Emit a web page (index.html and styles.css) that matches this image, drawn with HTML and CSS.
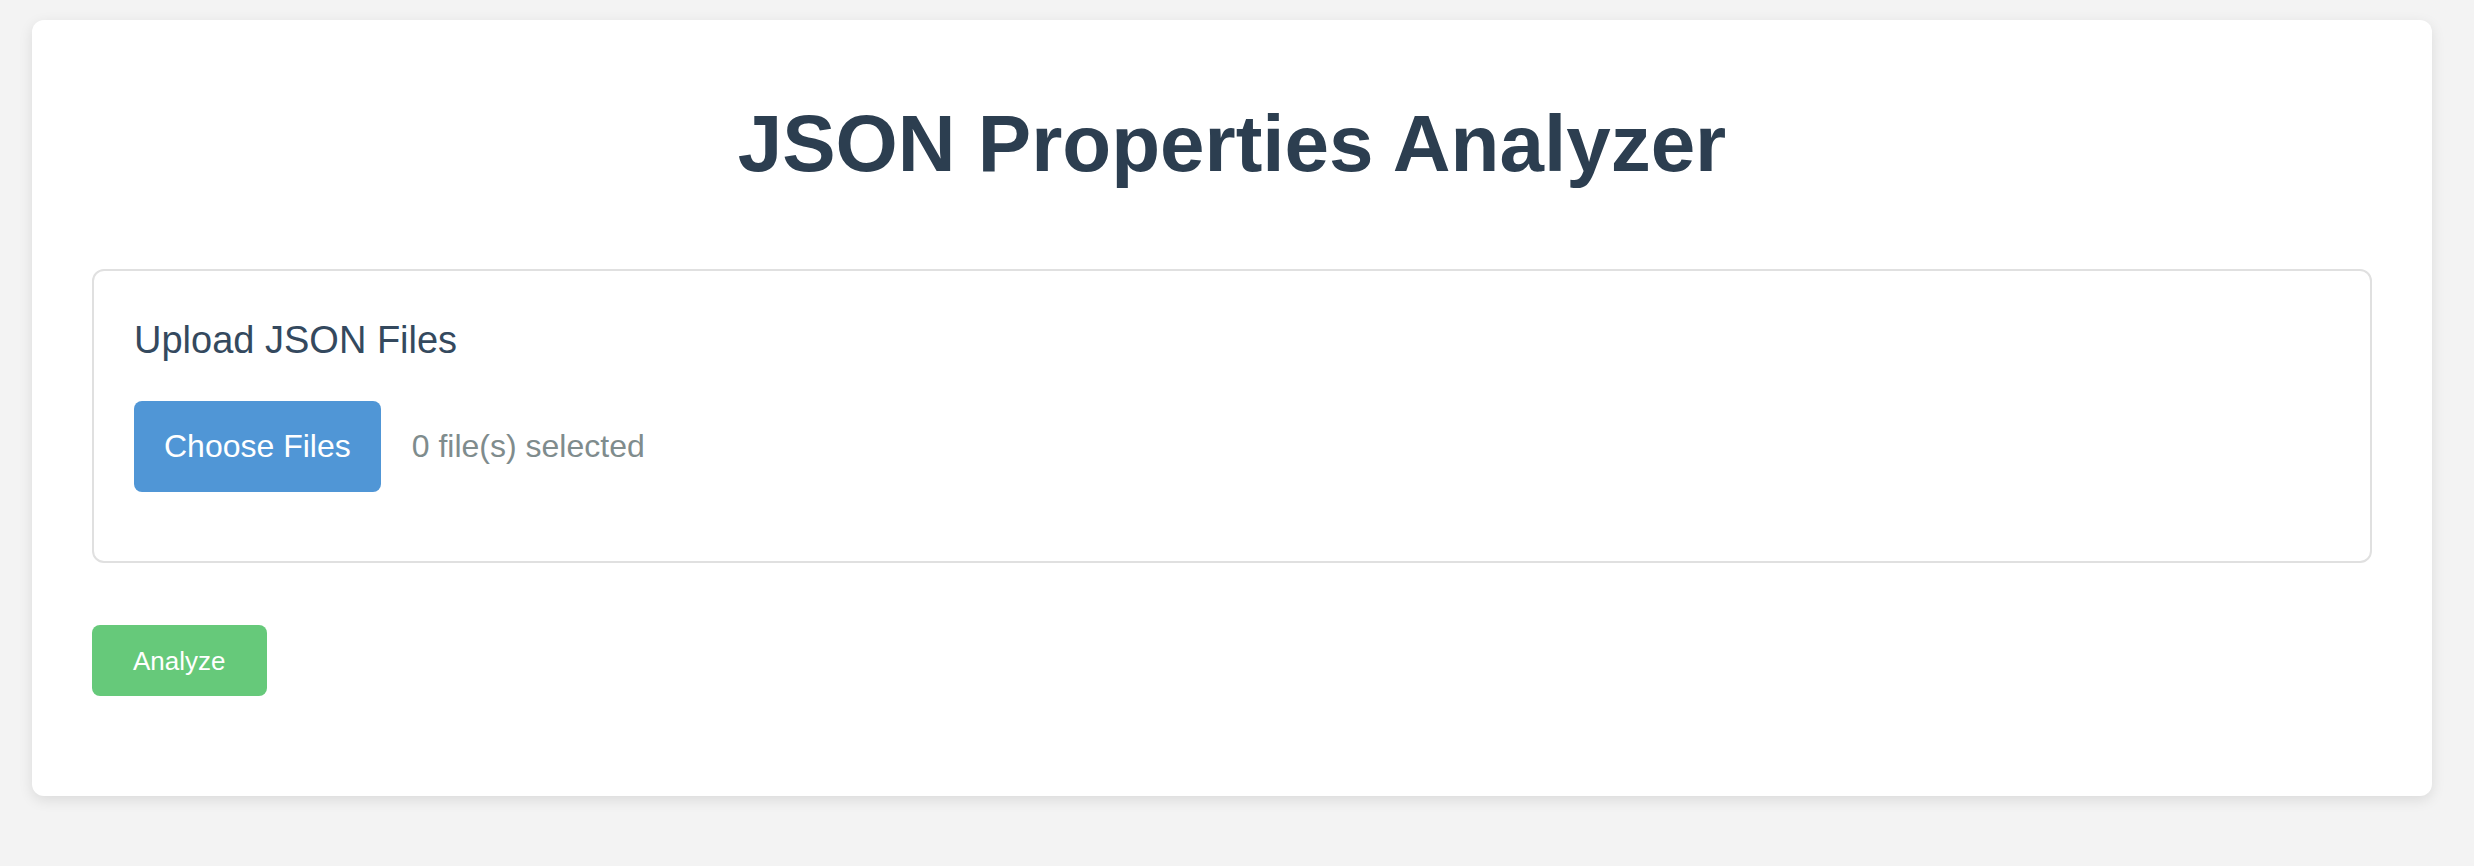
FILE: index.html
```html
<!DOCTYPE html>
<html lang="en">
<head>
<meta charset="utf-8">
<title>JSON Properties Analyzer</title>
<link rel="stylesheet" href="styles.css">
</head>
<body>
<div class="card">
  <h1 class="title">JSON Properties Analyzer</h1>
  <div class="upload">
    <h3 class="upload-title">Upload JSON Files</h3>
    <div class="file-row">
      <button class="choose-btn" type="button">Choose Files</button>
      <span class="file-status">0 file(s) selected</span>
    </div>
  </div>
  <button class="analyze-btn" type="button">Analyze</button>
</div>
</body>
</html>
```

FILE: styles.css
```css
html, body {
  margin: 0;
  background: #f3f3f3;
}
body {
  padding: 20px 42px 70px 32px;
  font-family: "Liberation Sans", Arial, Helvetica, sans-serif;
}
.card {
  background: #ffffff;
  border-radius: 12px;
  box-shadow: 0 4px 14px rgba(0, 0, 0, 0.10);
  padding: 60px 60px 100px;
}
.title {
  margin: 18px 0 79px;
  font-size: 80px;
  line-height: 92px;
  font-weight: 700;
  color: #2c3e50;
  text-align: center;
}
.upload {
  border: 2px solid #e0e0e0;
  border-radius: 12px;
  padding: 47px 40px 69px;
}
.upload-title {
  margin: 0 0 39px;
  font-size: 38px;
  line-height: 44px;
  font-weight: 400;
  color: #34495e;
}
.file-row {
  display: flex;
  align-items: center;
  gap: 31px;
}
.choose-btn {
  height: 91px;
  padding: 0 30px;
  border: none;
  border-radius: 8px;
  background: #5096d6;
  color: #ffffff;
  font-family: inherit;
  font-size: 32px;
  line-height: 37px;
}
.file-status {
  font-size: 32px;
  line-height: 37px;
  color: #7f8c8d;
}
.analyze-btn {
  display: block;
  margin-top: 62px;
  height: 71px;
  padding: 0 41px;
  border: none;
  border-radius: 8px;
  background: #66c97a;
  color: #ffffff;
  font-family: inherit;
  font-size: 26px;
  line-height: 30px;
}
```
